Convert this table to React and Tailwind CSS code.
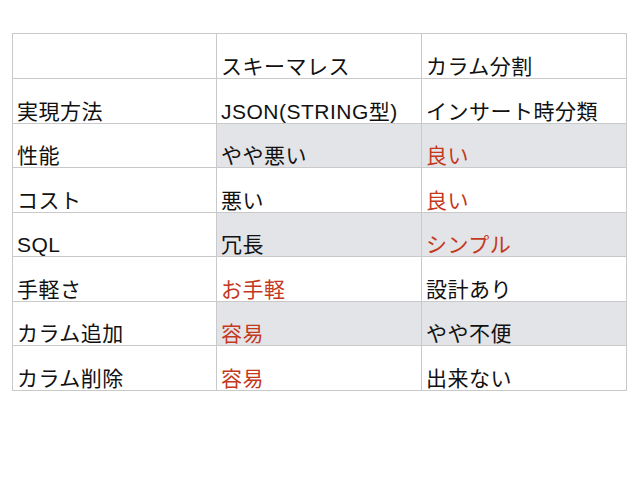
import React from "react";

const RED = "text-[#c4391d]";

const rows = [
  { label: "実現方法", a: "JSON(STRING型)", b: "インサート時分類" },
  { label: "性能", a: "やや悪い", b: "良い", bRed: true, gray: true },
  { label: "コスト", a: "悪い", b: "良い", bRed: true },
  { label: "SQL", a: "冗長", b: "シンプル", bRed: true, gray: true },
  { label: "手軽さ", a: "お手軽", aRed: true, b: "設計あり" },
  { label: "カラム追加", a: "容易", aRed: true, b: "やや不便", gray: true },
  { label: "カラム削除", a: "容易", aRed: true, b: "出来ない" },
];

const Cell = ({ children, red, gray }) => (
  <td
    className={`border border-[#c9c9c9] align-bottom px-[4px] pb-[1px] leading-none ${
      gray ? "bg-[#e3e4e7]" : "bg-white"
    } ${red ? RED : "text-[#111]"}`}
  >
    {children}
  </td>
);

export default function App() {
  return (
    <div
      className="w-[638px] h-[479px] bg-white pt-[33px] pl-[12px]"
      style={{ fontFamily: '"Liberation Sans", "Noto Sans CJK JP", sans-serif' }}
    >
      <table className="border-collapse table-fixed w-[614px] text-[21px] tracking-[0.5px]">
        <colgroup>
          <col className="w-[204px]" />
          <col className="w-[205px]" />
          <col className="w-[205px]" />
        </colgroup>
        <tbody>
          <tr className="h-[45px]">
            <Cell></Cell>
            <Cell>スキーマレス</Cell>
            <Cell>カラム分割</Cell>
          </tr>
          {rows.map((r) => (
            <tr key={r.label} className="h-[44.5px]">
              <Cell>{r.label}</Cell>
              <Cell red={r.aRed} gray={r.gray}>
                {r.a}
              </Cell>
              <Cell red={r.bRed} gray={r.gray}>
                {r.b}
              </Cell>
            </tr>
          ))}
        </tbody>
      </table>
    </div>
  );
}
